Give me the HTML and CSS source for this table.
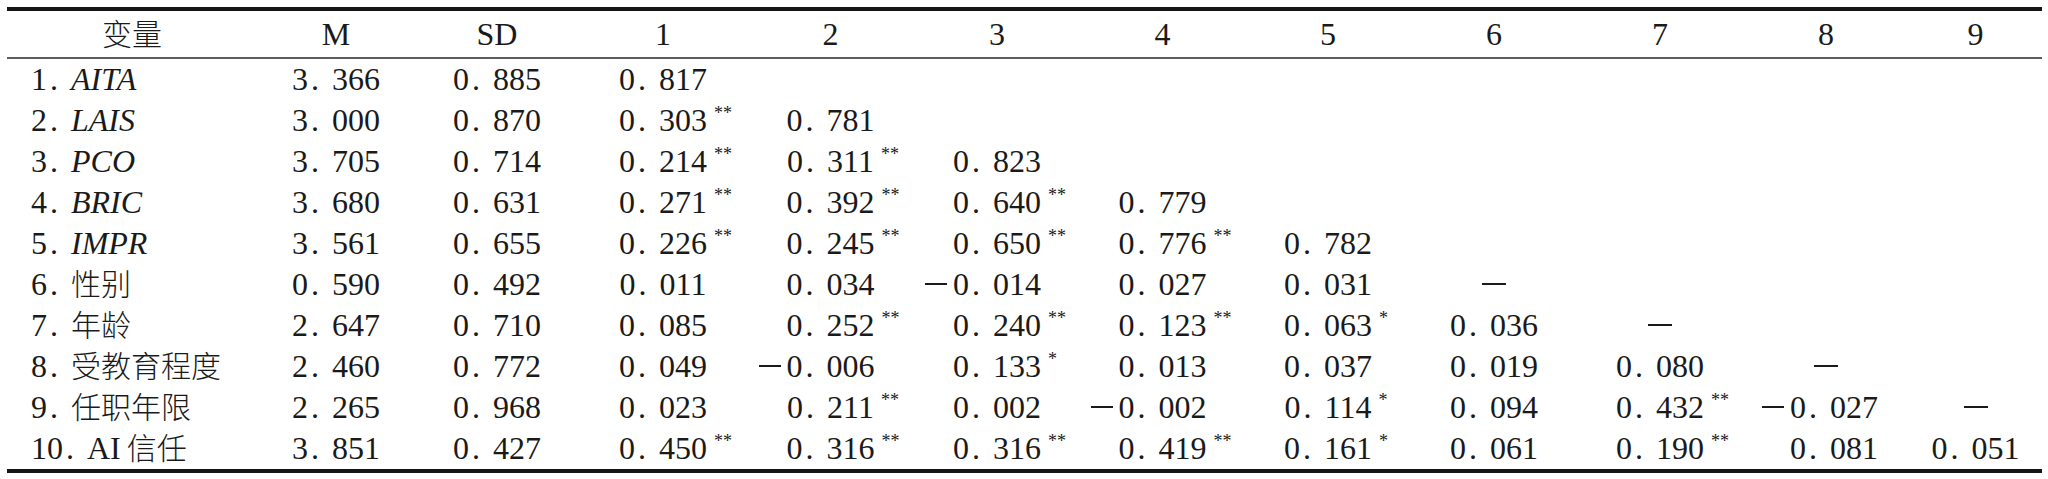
FILE: index.html
```html
<!DOCTYPE html>
<html lang="zh-CN">
<head>
<meta charset="utf-8">
<title>相关系数表</title>
<link rel="stylesheet" href="styles.css">
</head>
<body>
<table class="corr">
  <colgroup>
    <col class="c-label"><col class="c-m"><col class="c-sd"><col class="c-n1"><col class="c-n2"><col class="c-n"><col class="c-n4"><col class="c-n"><col class="c-n"><col class="c-n"><col class="c-n"><col class="c-n9">
  </colgroup>
  <thead>
    <tr><th><span class="cn">变量</span></th><th>M</th><th>SD</th><th>1</th><th>2</th><th>3</th><th>4</th><th>5</th><th>6</th><th>7</th><th>8</th><th>9</th></tr>
  </thead>
  <tbody>
    <tr><td class="lab">1<span class="d">.</span><i>AITA</i></td><td>3<span class="d">.</span>366</td><td>0<span class="d">.</span>885</td><td>0<span class="d">.</span>817</td><td></td><td></td><td></td><td></td><td></td><td></td><td></td><td></td></tr>
    <tr><td class="lab">2<span class="d">.</span><i>LAIS</i></td><td>3<span class="d">.</span>000</td><td>0<span class="d">.</span>870</td><td>0<span class="d">.</span>303<sup>**</sup></td><td>0<span class="d">.</span>781</td><td></td><td></td><td></td><td></td><td></td><td></td><td></td></tr>
    <tr><td class="lab">3<span class="d">.</span><i>PCO</i></td><td>3<span class="d">.</span>705</td><td>0<span class="d">.</span>714</td><td>0<span class="d">.</span>214<sup>**</sup></td><td>0<span class="d">.</span>311<sup>**</sup></td><td>0<span class="d">.</span>823</td><td></td><td></td><td></td><td></td><td></td><td></td></tr>
    <tr><td class="lab">4<span class="d">.</span><i>BRIC</i></td><td>3<span class="d">.</span>680</td><td>0<span class="d">.</span>631</td><td>0<span class="d">.</span>271<sup>**</sup></td><td>0<span class="d">.</span>392<sup>**</sup></td><td>0<span class="d">.</span>640<sup>**</sup></td><td>0<span class="d">.</span>779</td><td></td><td></td><td></td><td></td><td></td></tr>
    <tr><td class="lab">5<span class="d">.</span><i>IMPR</i></td><td>3<span class="d">.</span>561</td><td>0<span class="d">.</span>655</td><td>0<span class="d">.</span>226<sup>**</sup></td><td>0<span class="d">.</span>245<sup>**</sup></td><td>0<span class="d">.</span>650<sup>**</sup></td><td>0<span class="d">.</span>776<sup>**</sup></td><td>0<span class="d">.</span>782</td><td></td><td></td><td></td><td></td></tr>
    <tr><td class="lab">6<span class="d">.</span><span class="cn">性别</span></td><td>0<span class="d">.</span>590</td><td>0<span class="d">.</span>492</td><td>0<span class="d">.</span>011</td><td>0<span class="d">.</span>034</td><td><span class="m"></span>0<span class="d">.</span>014</td><td>0<span class="d">.</span>027</td><td>0<span class="d">.</span>031</td><td><span class="dash"></span></td><td></td><td></td><td></td></tr>
    <tr><td class="lab">7<span class="d">.</span><span class="cn">年龄</span></td><td>2<span class="d">.</span>647</td><td>0<span class="d">.</span>710</td><td>0<span class="d">.</span>085</td><td>0<span class="d">.</span>252<sup>**</sup></td><td>0<span class="d">.</span>240<sup>**</sup></td><td>0<span class="d">.</span>123<sup>**</sup></td><td>0<span class="d">.</span>063<sup>*</sup></td><td>0<span class="d">.</span>036</td><td><span class="dash"></span></td><td></td><td></td></tr>
    <tr><td class="lab">8<span class="d">.</span><span class="cn">受教育程度</span></td><td>2<span class="d">.</span>460</td><td>0<span class="d">.</span>772</td><td>0<span class="d">.</span>049</td><td><span class="m"></span>0<span class="d">.</span>006</td><td>0<span class="d">.</span>133<sup>*</sup></td><td>0<span class="d">.</span>013</td><td>0<span class="d">.</span>037</td><td>0<span class="d">.</span>019</td><td>0<span class="d">.</span>080</td><td><span class="dash"></span></td><td></td></tr>
    <tr><td class="lab">9<span class="d">.</span><span class="cn">任职年限</span></td><td>2<span class="d">.</span>265</td><td>0<span class="d">.</span>968</td><td>0<span class="d">.</span>023</td><td>0<span class="d">.</span>211<sup>**</sup></td><td>0<span class="d">.</span>002</td><td><span class="m"></span>0<span class="d">.</span>002</td><td>0<span class="d">.</span>114<sup>*</sup></td><td>0<span class="d">.</span>094</td><td>0<span class="d">.</span>432<sup>**</sup></td><td class="shift"><span class="m"></span>0<span class="d">.</span>027</td><td><span class="dash"></span></td></tr>
    <tr><td class="lab">10<span class="d">.</span>AI<span class="cn gap">信任</span></td><td>3<span class="d">.</span>851</td><td>0<span class="d">.</span>427</td><td>0<span class="d">.</span>450<sup>**</sup></td><td>0<span class="d">.</span>316<sup>**</sup></td><td>0<span class="d">.</span>316<sup>**</sup></td><td>0<span class="d">.</span>419<sup>**</sup></td><td>0<span class="d">.</span>161<sup>*</sup></td><td>0<span class="d">.</span>061</td><td>0<span class="d">.</span>190<sup>**</sup></td><td class="shift">0<span class="d">.</span>081</td><td>0<span class="d">.</span>051</td></tr>
  </tbody>
</table>
</body>
</html>
```

FILE: styles.css
```css
html, body {
  margin: 0;
  padding: 0;
  background: #ffffff;
}

body {
  padding: 7px 6px 0 7px;
}

.corr {
  width: 2035px;
  table-layout: fixed;
  border-collapse: collapse;
  border-top: 4px solid #151515;
  border-bottom: 4px solid #151515;
  font-family: "Liberation Serif", "Times New Roman", Tinos, "DejaVu Serif", serif;
  font-size: 32px;
  color: #1a1a1a;
}

.c-label { width: 250px; }
.c-m { width: 158px; }
.c-sd { width: 164px; }
.c-n1 { width: 168px; }
.c-n2 { width: 167px; }
.c-n { width: 166px; }
.c-n4 { width: 165px; }
.c-n9 { width: 133px; }

.corr th,
.corr td {
  padding: 0;
  text-align: center;
  white-space: nowrap;
  font-weight: normal;
  line-height: 41px;
  height: 41px;
}

.corr thead th {
  height: 46px;
  line-height: 46px;
  border-bottom: 2px solid #5c5c5c;
}

.corr td.lab {
  text-align: left;
  padding-left: 24px;
}

.corr td.shift {
  padding-left: 16px;
}

.lab i {
  font-style: italic;
  font-family: "Liberation Serif", "Times New Roman", "DejaVu Serif", serif;
}

.cn {
  font-family: "Noto Sans CJK SC", "Noto Sans CJK JP", sans-serif;
  font-size: 30px;
  font-weight: 300;
  line-height: 1;
}

.gap {
  margin-left: 6px;
}

.d {
  display: inline-block;
  width: 24px;
  padding-left: 3px;
  box-sizing: border-box;
  text-align: left;
}

.corr sup {
  display: inline-block;
  width: 30px;
  margin-right: -30px;
  padding-left: 7px;
  box-sizing: border-box;
  text-align: left;
  font-size: 18px;
  line-height: 18px;
  vertical-align: 12px;
}

.m {
  display: inline-block;
  width: 22px;
  margin-left: -28px;
  margin-right: 6px;
  border-top: 2px solid #1a1a1a;
  vertical-align: 0.3em;
}

.dash {
  display: inline-block;
  width: 24px;
  border-top: 2px solid #1a1a1a;
  vertical-align: 0.3em;
}
```
